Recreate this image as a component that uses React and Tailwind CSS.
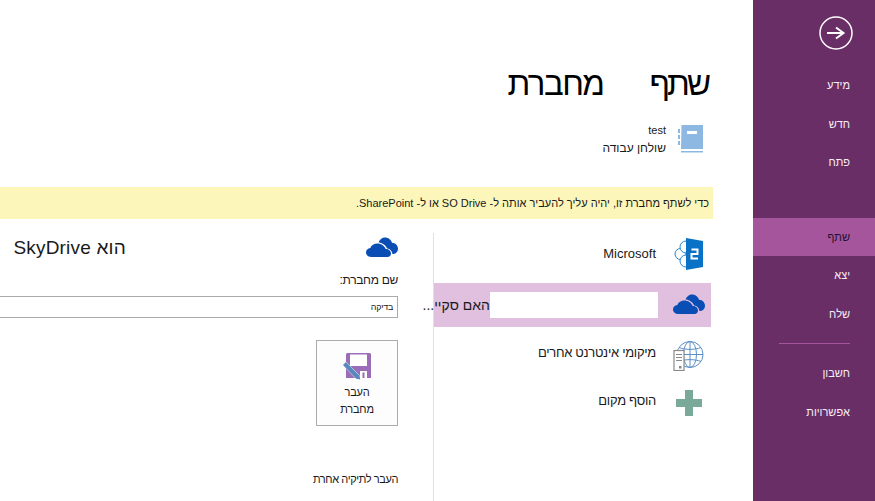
import React from 'react';

const navTop = ['מידע', 'חדש', 'פתח'];
const navMid = ['יצא', 'שלח'];
const navBottom = ['חשבון', 'אפשרויות'];

const NavItem = ({ label, active }) => (
  <div className={`flex h-[38.5px] items-center pr-[25px] text-[11px] ${active ? 'bg-[#a4559c] text-[#1c1030]' : 'text-[#f7eef6]'}`}>
    {label}
  </div>
);

const Cloud = ({ className }) => (
  <svg viewBox="0 0 32 20" className={className} fill="#0a4db5">
    <path d="M12.500 5.500C13.500 2.500 16 .5 19 .5c3.300 0 6 2.200 7 5.200 3.400.1 6 2.800 6 6 0 2.800-1.800 5-4.500 5.300h-1c-.3-3-2.500-5.300-5.300-5.600-1.700-3.400-5.200-5.900-9-5.900h.3z" />
    <path d="M5.500 20C2.400 20 0 18.200 0 15.500 0 13 1.800 11.200 4.300 10.900 5.300 8.200 8.200 6.500 11.300 6.500c3.700 0 7 2.200 8.400 5.500 3 0 5.300 2 5.300 4.500 0 2-1.500 3.500-3.500 3.500z" />
  </svg>
);

const SharePointIcon = () => (
  <svg viewBox="0 0 32 32" className="h-[32px] w-[32px]">
    <g fill="#fff" stroke="#2a86d0" strokeWidth="1">
      <circle cx="7.500" cy="16" r="5.500" />
      <circle cx="13" cy="9" r="6" />
      <circle cx="13" cy="23" r="6" />
    </g>
    <path d="M13 0l17 3v26l-17 3z" fill="#0a72c6" />
    <path d="M18.500 11.500h6v4.500h-6v4.500h6.500" fill="none" stroke="#fff" strokeWidth="2" />
  </svg>
);

const GlobeIcon = () => (
  <svg viewBox="0 0 32 30" className="mt-[6px] h-[30px] w-[32px]" fill="none">
    <g stroke="#5b8fc7" strokeWidth="1">
      <circle cx="17" cy="13.500" r="13" />
      <ellipse cx="17" cy="13.500" rx="6.500" ry="13" />
      <path d="M17 .5v26M6 6.500c6 2.500 16 2.500 22 0M4 13.500h26M6 20.500c6-2.500 16-2.500 22 0" />
    </g>
    <rect x="1" y="9.500" width="10" height="20" fill="#fff" stroke="#8a8a8a" strokeWidth="1.200" />
    <path d="M3 13.500h6M3 16.500h6M3 19.500h6" stroke="#8a8a8a" />
    <rect x="6" y="25" width="2.500" height="2.500" fill="#8a8a8a" />
  </svg>
);

const PlusIcon = () => (
  <svg viewBox="0 0 26 26" className="mt-[4px] h-[26px] w-[26px]" fill="#7aa899">
    <path d="M9 0h8v9h9v8h-9v9H9v-9H0V9h9z" />
  </svg>
);

const NotebookIcon = () => (
  <svg viewBox="0 0 25 28" className="h-[28px] w-[25px]">
    <path d="M3.500 0H25v24H3z" fill="#8cb8e2" />
    <path d="M3 26h22v1.500H3z" fill="#8cb8e2" />
    <path d="M9 6h10v3H9z" fill="#fff" />
    <path d="M0 4h2v4H0zM0 10h2v4H0zM0 16h2v4H0z" fill="#8cb8e2" />
  </svg>
);

const SaveIcon = () => (
  <svg viewBox="0 0 30 30" className="h-[30px] w-[30px]">
    <path d="M5 1h23l1 1v24H4V2z" fill="#9b6db8" />
    <path d="M8 2.500h17V14H8z" fill="#fff" />
    <path d="M18 19h7v7h-7z" fill="#fff" />
    <path d="M20.500 20.500h2V26h-2z" fill="#9b6db8" />
    <path d="M1 13l3-3 13.500 13.500 .7 4-4-.8z" fill="#5a87bd" stroke="#fff" strokeWidth="1" paintOrder="stroke" />
  </svg>
);

const Place = ({ icon, children, className }) => (
  <div className={`flex items-center ${className}`}>
    <div className="flex w-[44px] shrink-0 justify-center">{icon}</div>
    <div className="mr-[11px] whitespace-nowrap text-[13px] tracking-[-0.3px]">{children}</div>
  </div>
);

export default function App() {
  return (
    <div dir="rtl" className="flex h-[501px] w-[875px] overflow-hidden bg-white font-['Liberation_Sans',sans-serif] text-[#1a1a1a]">
      {/* Side menu */}
      <aside className="flex w-[122px] shrink-0 flex-col bg-[#6a2e66]">
        <div className="flex h-[66px] items-center pr-[22px]">
          <svg viewBox="0 0 34 34" className="h-[34px] w-[34px]" fill="none" stroke="#fff">
            <circle cx="17" cy="17" r="16" strokeWidth="1.500" />
            <path d="M8 17h16.500M17 11.500l7.500 5.500-7.500 5.500" strokeWidth="2" />
          </svg>
        </div>
        {navTop.map(label => <NavItem key={label} label={label} />)}
        <div className="mt-[36px]">
          <NavItem label="שתף" active />
        </div>
        {navMid.map(label => <NavItem key={label} label={label} />)}
        <div className="mr-[25px] mt-[10px] mb-[10px] h-px w-[71px] bg-[#a4559c]" />
        {navBottom.map(label => <NavItem key={label} label={label} />)}
      </aside>

      {/* Main content */}
      <main className="flex min-w-0 flex-1 flex-col overflow-hidden">
        <h1 className="mr-[45px] mt-[62px] flex gap-[46px] whitespace-nowrap text-[33px] leading-[44px] tracking-[-1.5px] text-black">
          <span className="tracking-[-3px]">שתף</span>
          <span>מחברת</span>
        </h1>

        <div className="mr-[50px] mt-[15px] flex items-center gap-[12px]">
          <NotebookIcon />
          <div className="text-[12px] leading-[18px]">
            <div className="text-[11px]">test</div>
            <div>שולחן עבודה</div>
          </div>
        </div>

        <div className="mr-[40px] mt-[30px] flex h-[32px] shrink-0 items-center bg-[#fcf6bb] pr-[4px] text-[11px] whitespace-nowrap">
          כדי לשתף מחברת זו, יהיה עליך להעביר אותה ל- SO Drive או ל- SharePoint.
        </div>

        <div className="mr-[42px] mt-[14px] flex flex-1">
          {/* Places list */}
          <div className="w-[278px] shrink-0 border-l border-[#e1e1e1] pt-[5px]">
            <Place icon={<SharePointIcon />} className="h-[32px]">
              <span className="tracking-normal">Microsoft</span>
            </Place>
            <div className="mt-[13px] flex h-[44px] items-center bg-[#e0bfdf]">
              <div className="mb-[2px] flex w-[44px] shrink-0 justify-center"><Cloud className="h-[20px] w-[32px]" /></div>
              <div className="mr-[9px] h-[26px] w-[168px] shrink-0 bg-white" />
              <div className="whitespace-nowrap text-[14px]">האם סקיי...</div>
            </div>
            <Place icon={<GlobeIcon />} className="mt-[10px] h-[32px]">מיקומי אינטרנט אחרים</Place>
            <Place icon={<PlusIcon />} className="mt-[16px] h-[32px]">הוסף מקום</Place>
          </div>

          {/* Selected place */}
          <div className="flex-1 pr-[35px]">
            <div className="flex h-[30px] items-center gap-[240px]">
              <Cloud className="mb-[2px] h-[20px] w-[32px]" />
              <div className="whitespace-nowrap text-[19px] tracking-[0.2px]">הוא SkyDrive</div>
            </div>
            <div className="mt-[9px] text-[12px] leading-[16px] tracking-[-0.3px]">שם מחברת:</div>
            <input
              readOnly
              defaultValue="בדיקה"
              className="mt-[8px] block h-[22px] w-[410px] border border-[#ababab] px-[4px] text-[9px] tracking-[-0.3px] text-[#1a1a1a] outline-none"
            />
            <button className="mt-[22px] flex h-[86px] w-[82px] flex-col items-center border border-[#ababab] bg-[#fdfdfd] pt-[11px] text-[11px] leading-[17px] tracking-[-0.2px]">
              <SaveIcon />
              <span className="mt-[2px]">העבר</span>
              <span>מחברת</span>
            </button>
            <div className="mt-[45px] text-[11px] tracking-[-0.4px]">העבר לתיקיה אחרת</div>
          </div>
        </div>
      </main>
    </div>
  );
}
